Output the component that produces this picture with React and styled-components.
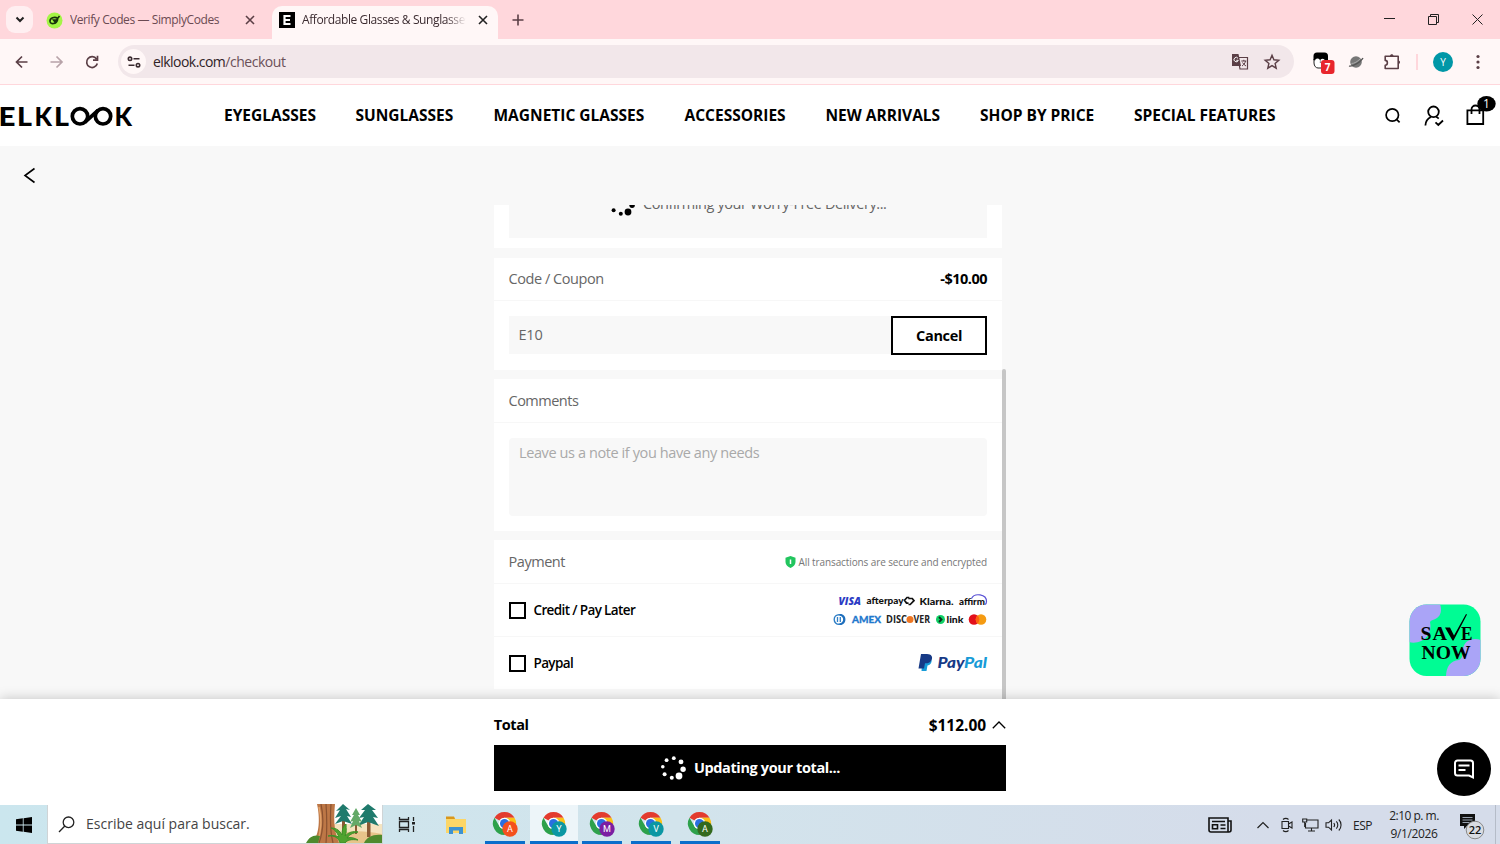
import React from "react";
import styled, { createGlobalStyle } from "styled-components";

const colors = {
  pink: "#ffd7dc",
  toolbar: "#fff7f7",
  address: "#f2e7ea",
  chromeIcon: "#5b3f46",
  page: "#f8f8f8",
  grey: "#666666",
};

const GlobalStyle = createGlobalStyle`
  * {
    box-sizing: border-box;
  }
  body {
    margin: 0;
    font-family: "Open Sans", "Noto Sans", sans-serif;
    overflow: hidden;
  }
  svg {
    display: block;
    flex-shrink: 0;
    overflow: visible;
  }
`;

const Screen = styled.div`
  width: 1500px;
  height: 844px;
  display: flex;
  flex-direction: column;
  overflow: hidden;
  background: #ffffff;
`;

const Text = styled.span`
  font-size: ${({ $size }) => $size || 14.5}px;
  font-weight: ${({ $weight }) => $weight || 400};
  color: ${({ $color }) => $color || "#000000"};
  letter-spacing: ${({ $spacing }) => $spacing || 0}px;
  line-height: 20px;
  white-space: nowrap;
`;

/* ---------- browser ---------- */

const TabStrip = styled.div`
  height: 39px;
  flex-shrink: 0;
  display: flex;
  align-items: flex-end;
  background: ${colors.pink};
`;

const TabSearch = styled.div`
  width: 27px;
  height: 27px;
  margin: 0 0 6px 6px;
  border-radius: 9px;
  background: #ffeff1;
  display: flex;
  align-items: center;
  justify-content: center;
`;

const Tab = styled.div`
  width: ${({ $width }) => $width}px;
  height: 33px;
  padding: 0 10px 5px 7px;
  display: flex;
  align-items: center;
  border-radius: 10px 10px 0 0;
  background: ${({ $active }) => ($active ? colors.toolbar : "transparent")};
  margin-left: ${({ $left }) => $left}px;
`;

const TabTitle = styled(Text)`
  flex: 1;
  margin: 0 12px 0 7px;
  overflow: hidden;
  mask-image: ${({ $fade }) =>
    $fade ? "linear-gradient(90deg, #000 88%, transparent)" : "none"};
`;

const NewTab = styled.div`
  height: 33px;
  padding: 8px 0 0 14px;
`;

const WindowButtons = styled.div`
  height: 39px;
  margin-left: auto;
  display: flex;
  align-items: center;
  gap: 33px;
  padding-right: 17px;
`;

const Toolbar = styled.div`
  height: 46px;
  flex-shrink: 0;
  display: flex;
  align-items: center;
  background: ${colors.toolbar};
  border-bottom: 1px solid ${colors.pink};
  padding: 0 14px;
`;

const NavIcons = styled.div`
  display: flex;
  align-items: center;
  gap: 19px;
  width: 104px;
`;

const AddressBar = styled.div`
  width: 1176px;
  height: 33px;
  border-radius: 17px;
  background: ${colors.address};
  display: flex;
  align-items: center;
  padding: 0 13px 0 3px;
`;

const SiteInfo = styled.div`
  width: 25px;
  height: 25px;
  border-radius: 50%;
  background: ${colors.toolbar};
  display: flex;
  align-items: center;
  justify-content: center;
  margin-right: 7px;
`;

const AddressIcons = styled.div`
  margin-left: auto;
  display: flex;
  gap: 14px;
`;

const Extensions = styled.div`
  flex: 1;
  display: flex;
  align-items: center;
  padding-left: 18px;
`;

const ToolbarRule = styled.div`
  width: 2px;
  height: 16px;
  background: ${colors.pink};
  margin: 0 15px 0 15px;
`;

const Avatar = styled.div`
  width: 20px;
  height: 20px;
  flex-shrink: 0;
  border-radius: 50%;
  background: #0097a7;
  color: #ffffff;
  font-size: 10px;
  display: flex;
  align-items: center;
  justify-content: center;
  margin-right: 23px;
`;

/* ---------- shop ---------- */

const ShopHeader = styled.header`
  height: 61px;
  flex-shrink: 0;
  display: flex;
  align-items: center;
  background: #ffffff;
`;

const Menu = styled.nav`
  display: flex;
  gap: 39px;
  margin-left: 91px;
  padding-bottom: 1px;
`;

const MenuItem = styled.a`
  width: ${({ $width }) => $width}px;
  font-size: 15.5px;
  font-weight: 700;
  line-height: 20px;
  white-space: nowrap;
`;

const HeaderIcons = styled.div`
  margin-left: auto;
  display: flex;
  align-items: center;
  gap: 22px;
  padding-right: 4px;

  svg:last-child {
    margin-bottom: 5px;
    margin-left: -1px;
  }
`;

const Content = styled.main`
  height: 553px;
  flex-shrink: 0;
  display: flex;
  background: ${colors.page};
`;

const BackArea = styled.div`
  width: 494px;
  padding: 21px 0 0 23px;
`;

const Panel = styled.div`
  width: 512px;
  margin-top: 59px;
  display: flex;
  overflow: hidden;
`;

const Cards = styled.div`
  width: 508px;
  height: 494px;
  display: flex;
  flex-direction: column;
  justify-content: flex-end;
  padding-bottom: 10px;
`;

const ScrollTrack = styled.div`
  width: 4px;
  padding-top: 164px;
`;

const ScrollThumb = styled.div`
  width: 4px;
  height: 330px;
  background: #c6c6c6;
  border-radius: 2px 2px 0 0;
`;

const Card = styled.section`
  flex-shrink: 0;
  background: #ffffff;
  margin-bottom: ${({ $gap }) => $gap || 0}px;
`;

const CardHeader = styled.div`
  height: ${({ $height }) => $height || 44}px;
  padding: 0 15px 0 14.5px;
  display: flex;
  align-items: center;
  justify-content: space-between;
  border-bottom: 1px solid #f7f7f7;
`;

const CardBody = styled.div`
  display: flex;
  padding: 15px 15px ${({ $bottom }) => $bottom || 15}px 14.5px;
`;

const Confirming = styled.div`
  width: 479px;
  height: 68px;
  background: ${colors.page};
  display: flex;
  align-items: center;
  justify-content: center;
  gap: 8px;
`;

const CodeInput = styled.div`
  width: 383px;
  height: 38px;
  padding: 7px 10px;
  background: ${colors.page};
`;

const CancelButton = styled.button`
  width: 96px;
  height: 39px;
  margin-bottom: -1px;
  border: 2px solid #000000;
  background: #ffffff;
  padding: 0;
  font-family: inherit;
`;

const Note = styled.div`
  width: 478px;
  height: 78px;
  border-radius: 4px;
  background: ${colors.page};
  padding: 3px 10.5px;
`;

const Secure = styled.div`
  display: flex;
  align-items: center;
  gap: 3px;
`;

const PayRow = styled.div`
  height: ${({ $last }) => ($last ? 52 : 53)}px;
  padding: 0 15px 0 14.5px;
  display: flex;
  align-items: center;
  border-bottom: ${({ $last }) => ($last ? "none" : "1px solid #f7f7f7")};
`;

const Checkbox = styled.div`
  width: 17px;
  height: 17px;
  border: 2px solid #000000;
  margin-right: 8px;
`;

const PayMarks = styled.div`
  margin-left: auto;
`;

const TotalBar = styled.footer`
  height: 106px;
  flex-shrink: 0;
  background: #ffffff;
  box-shadow: 0 0 12px rgba(0, 0, 0, 0.22);
  display: flex;
  flex-direction: column;
  align-items: center;
  padding-top: 16px;
  position: relative;
`;

const TotalRow = styled.div`
  width: 512.5px;
  height: 20px;
  display: flex;
  align-items: center;
`;

const Amount = styled.div`
  margin-left: auto;
  display: flex;
  align-items: center;
  gap: 6px;
`;

const UpdateButton = styled.div`
  width: 512.5px;
  height: 46px;
  margin-top: 10px;
  background: #000000;
  display: flex;
  align-items: center;
  justify-content: center;
  gap: 8px;
`;

const SaveBadge = styled.div`
  position: absolute;
  right: 19px;
  top: 604px;
`;

const ChatButton = styled.div`
  position: absolute;
  right: 9.5px;
  top: 742px;
  width: 54px;
  height: 54px;
  border-radius: 50%;
  background: #000000;
  display: flex;
  align-items: center;
  justify-content: center;
`;

/* ---------- taskbar ---------- */

const Taskbar = styled.div`
  height: 39px;
  flex-shrink: 0;
  display: flex;
  background: linear-gradient(90deg, #cbe6ee, #d2e4ec 45%, #d5dcea 85%);
  position: relative;
`;

const StartButton = styled.div`
  width: 47px;
  display: flex;
  align-items: center;
  justify-content: center;
`;

const SearchBox = styled.div`
  width: 336px;
  border: 1px solid #cfd4d6;
  border-top: none;
  background: #ffffff;
  display: flex;
  align-items: center;
  padding-left: 10px;
`;

const SearchLabel = styled(Text)`
  margin-left: 11px;
`;

const ForestSlot = styled.div`
  margin-left: auto;
  align-self: flex-end;
  overflow: hidden;
`;

const TaskIcon = styled.div`
  width: ${({ $width }) => $width}px;
  display: flex;
  align-items: center;
  justify-content: center;
`;

const TaskApp = styled.div`
  width: ${({ $active }) => ($active ? 48 : 40)}px;
  margin: 0 ${({ $active }) => ($active ? 0.3 : 4.3)}px;
  display: flex;
  align-items: center;
  justify-content: center;
  background: ${({ $active }) => ($active ? "#edf5f9" : "transparent")};
  border-bottom: 3px solid #0a6ecb;
  padding-top: 2px;
`;

const Tray = styled.div`
  margin-left: auto;
  display: flex;
  align-items: center;
`;

const TrayItem = styled.div`
  margin-left: ${({ $left }) => $left}px;
`;

const Clock = styled.div`
  width: 60px;
  margin: 0 15px 0 12px;
  display: flex;
  flex-direction: column;
  align-items: center;
`;

const ClockLine = styled(Text)`
  line-height: 18px;
`;

const CloseIcon = ({ color }) => (
  <svg width="10" height="10" viewBox="0 0 10 10" stroke={color} strokeWidth="1.6">
    <path d="M1 1l8 8M9 1l-8 8" />
  </svg>
);

const dots = [
  [13.8, 4.2, 1.9],
  [21, 7.8, 2.4],
  [23.1, 15.2, 2.7],
  [19, 22, 3.4],
  [11.8, 23.8, 2],
  [4.6, 20.2, 2],
  [2.8, 12.8, 1.8],
  [6.6, 6.2, 1.9],
];

const Spinner = ({ color }) => (
  <svg width="26" height="28" viewBox="0 0 26 28" fill={color}>
    {dots.map(([x, y, r]) => (
      <circle key={x} cx={x} cy={y} r={r} />
    ))}
  </svg>
);

const Logo = () => (
  <svg
    width="133"
    height="24"
    viewBox="0 0 133 24"
    fontFamily="Lato"
    fontWeight="900"
    fontSize="26">
    <text x="-1.5" y="21.5" textLength="17" lengthAdjust="spacingAndGlyphs">E</text>
    <text x="17" y="21.5" textLength="15" lengthAdjust="spacingAndGlyphs">L</text>
    <text x="34.5" y="21.5" textLength="17.5" lengthAdjust="spacingAndGlyphs">K</text>
    <text x="54" y="21.5" textLength="15" lengthAdjust="spacingAndGlyphs">L</text>
    <text x="114.5" y="21.5" textLength="17.5" lengthAdjust="spacingAndGlyphs">K</text>
    <g fill="none" stroke="#000" strokeWidth="3.7">
      <circle cx="80" cy="12.3" r="7.7" />
      <circle cx="103" cy="12.3" r="7.7" />
      <path d="M85 18.200L98 6.400" />
    </g>
  </svg>
);

const SearchIcon = () => (
  <svg width="18" height="18" viewBox="0 0 18 18" fill="none" stroke="#000" strokeWidth="1.7">
    <circle cx="8.300" cy="8" r="6.200" />
    <path d="M12.800 12.600l2.800 2.700" />
  </svg>
);

const UserIcon = () => (
  <svg width="20" height="22" viewBox="0 0 20 22" fill="none" stroke="#000" strokeWidth="1.8">
    <circle cx="9.500" cy="6.800" r="5.300" />
    <path d="M1.400 20.500c.2-4.200 2.200-7 5.600-8.500M12.200 12c1 .4 1.800.9 2.500 1.600M11.500 17.300l2.800 2.600 4.700-4.400" />
  </svg>
);

const BagIcon = () => (
  <svg width="31" height="32" viewBox="0 0 31 32" fill="none" stroke="#000" strokeWidth="1.800">
    <path d="M2.400 13.400h15.800v13.600H2.400zM6.500 17v-4.500a4 4 0 0 1 8 0V17" />
    <ellipse cx="21.500" cy="6.700" rx="9.200" ry="7.800" fill="#000" stroke="none" />
    <text x="21.500" y="11" fill="#fff" stroke="none" fontSize="12" textAnchor="middle" fontFamily="Open Sans">1</text>
  </svg>
);

const PaymentLogos = () => (
  <svg width="156" height="34" viewBox="0 0 156 34" fontFamily="Lato" fontWeight="900" fontSize="10">
    <g transform="translate(0.500 -1.500)">
      <text x="7" y="13.300" fill="#2b3bc4" fontFamily="Open Sans" fontWeight="800" fontStyle="italic" textLength="22.500" lengthAdjust="spacingAndGlyphs">VISA</text>
      <text x="35" y="12.500" fill="#111" textLength="37" lengthAdjust="spacingAndGlyphs">afterpay</text>
      <path d="M77.800 6h-2.300l-2.500 2.800 2 2.800h2M77 13h1.700l3.800-3.800-1.700-2.200h-4" fill="none" stroke="#111" strokeWidth="1.700" />
      <text x="88" y="13" fill="#111" textLength="34" lengthAdjust="spacingAndGlyphs">Klarna.</text>
      <text x="127.500" y="13" fill="#111" textLength="26" lengthAdjust="spacingAndGlyphs">affirm</text>
      <path d="M140 7c3-6 15-4.500 15 3 0 1.500-.5 2.500-1.500 3" fill="none" stroke="#5a52d6" strokeWidth="1.200" />
    </g>
    <g transform="translate(0.500 2)">
      <circle cx="7.500" cy="24.500" r="4.800" fill="#fff" stroke="#2f7fc6" strokeWidth="1.400" />
      <path d="M8 19c8-.5 8 11.500 0 11v-1.500c5-.5 5-7.500 0-8z" fill="#1f6fbd" />
      <path d="M6 22v5M8.800 22v5" stroke="#2f7fc6" strokeWidth="1.300" />
      <text x="20.500" y="28" fill="#1f78cd" stroke="#1f78cd" strokeWidth="0.300" textLength="29" lengthAdjust="spacingAndGlyphs">AMEX</text>
      <text x="54.500" y="28" fill="#222" fontFamily="Open Sans" fontWeight="700" textLength="21" lengthAdjust="spacingAndGlyphs">DISC</text>
      <circle cx="78.500" cy="24.500" r="3.500" fill="#ee7623" />
      <text x="82" y="28" fill="#222" fontFamily="Open Sans" fontWeight="700" textLength="16.500" lengthAdjust="spacingAndGlyphs">VER</text>
      <circle cx="109" cy="24.500" r="4.500" fill="#10d066" />
      <path d="M107.500 22l2.500 2.500-2.500 2.500" fill="none" stroke="#0a2e1c" strokeWidth="1.900" />
      <text x="115" y="28.200" fill="#111" textLength="17" lengthAdjust="spacingAndGlyphs">link</text>
      <circle cx="142.500" cy="24.500" r="5.300" fill="#e3101b" />
      <circle cx="149.500" cy="24.500" r="5.300" fill="#f59b12" />
      <path d="M146 20.500a5.300 5.300 0 0 1 0 8 5.300 5.300 0 0 1 0-8z" fill="#ff6011" />
    </g>
  </svg>
);

const PayPalLogo = () => (
  <svg width="69" height="20" viewBox="0 0 69 20">
    <path d="M4.500 4.500h6.500c4 .5 3.500 7-1.500 8l-1 5.500H3.500z" fill="#179bd7" />
    <path d="M3 1h6c4.500 0 6 3 4.500 6-1 2.500-3.500 3.500-6.500 3.300L6 15.500H.5z" fill="#173a86" />
    <g fontFamily="Lato" fontSize="15.500" fontWeight="900" fontStyle="italic">
      <text x="19.500" y="14.800" fill="#173a86" textLength="27" lengthAdjust="spacingAndGlyphs">Pay</text>
      <text x="46" y="14.800" fill="#179bd7" textLength="23" lengthAdjust="spacingAndGlyphs">Pal</text>
    </g>
  </svg>
);

const SaveNow = () => (
  <svg width="72" height="73" viewBox="0 0 72 73">
    <defs>
      <clipPath id="badge">
        <rect x="0.500" y="0.500" width="71" height="71.500" rx="17" />
      </clipPath>
    </defs>
    <g clipPath="url(#badge)">
      <rect width="72" height="73" fill="#00fc94" />
      <path d="M0 0h31c2 6 1 11-3 14-3 2-6 2-7 4 2 9-2 16-9 19-4 2-9 2-12 1z" fill="#aaa4f7" />
      <path d="M72 36c-8-3-17 0-18 9-1 6 0 9-4 11-9 1-13 7-13 17h35z" fill="#aaa4f7" />
    </g>
    <g fontFamily="Liberation Serif" fontWeight="700" fontSize="19">
      <text x="11.500" y="36" textLength="11" lengthAdjust="spacingAndGlyphs">S</text>
      <text x="23.500" y="36" textLength="14.500" lengthAdjust="spacingAndGlyphs">A</text>
      <text x="52" y="36" textLength="11.500" lengthAdjust="spacingAndGlyphs">E</text>
      <text x="12.500" y="55" textLength="49" lengthAdjust="spacingAndGlyphs">NOW</text>
    </g>
    <path d="M36 23.500h5l4 8L57 10l1 .5L44.500 36.500h-1z" />
  </svg>
);

const ChromeIcon = ({ letter, color }) => (
  <svg width="26" height="27" viewBox="0 0 26 27">
    <path d="M12.500 1a11.500 11.500 0 0 1 10 5.700H12.500A5.800 5.800 0 0 0 7.500 9.600L2.500 6.700A11.500 11.500 0 0 1 12.500 1" fill="#e33b2e" />
    <path d="M22.500 6.700A11.500 11.500 0 0 1 12.500 24L17.500 15.400A5.800 5.800 0 0 0 12.500 6.700z" fill="#fbc116" />
    <path d="M2.500 6.700A11.500 11.500 0 0 0 12.500 24L17.500 15.400A5.800 5.800 0 0 1 7.500 15.400z" fill="#2da14b" />
    <circle cx="12.500" cy="12.500" r="5.800" fill="#fff" />
    <circle cx="12.500" cy="12.500" r="4.500" fill="#2a6fe0" />
    <circle cx="18" cy="18" r="7.700" fill={color} />
    <text x="18" y="21.300" fill="#fff" fontSize="9" textAnchor="middle" fontFamily="Roboto">{letter}</text>
  </svg>
);

const Forest = () => (
  <svg width="76" height="39" viewBox="0 0 76 39">
    <path d="M28 20h48v19H24z" fill="#f4e4c0" />
    <path d="M28 34c12-8 25-8 48-4v9H28z" fill="#e7c48a" />
    <g fill="#8a5a34">
      <path d="M36 12h3v22h-3zM49 14h2v16h-2zM61 12h3.500v21H61z" />
    </g>
    <g fill="#1f7a6c">
      <path d="M37 0l-7 7 4-1-5 8 6-2-6 8 8-3 9 3-5-8 4 1-5-8 4 1z" />
      <path d="M62 0l-7 6 4 0-6 8 5-1-6 9 10-4 11 4-6-9 5 1-6-8 4 0z" />
    </g>
    <path d="M50 4l-4 7 2 0-4 7 3-1-3 7 6-3 6 3-3-7 3 1-4-7 2 0z" fill="#64a968" />
    <path d="M11 0h18c-1 12-2 24 4 39H6c8-8 8-26 5-39z" fill="#bd7746" />
    <path d="M15 0c3 14 2 28-2 39M20 0c1 14 1 27 0 39M25 0c-1 14-1 27 2 39" fill="none" stroke="#8b5230" strokeWidth="1.200" />
    <path d="M13 3c3 12 2 20 0 30" fill="none" stroke="#e2a36b" strokeWidth="1.500" />
    <path d="M0 39c3-6 8-9 14-7l-2 7zM58 39c3-6 9-9 18-8v8z" fill="#4e8a2d" />
    <path d="M34 39c-1-5-6-8-12-7 5-1 8 0 11 1-2-5-5-8-8-9 6 0 9 3 11 7 0-5 1-9 4-11 0 5 1 8-1 12 4-4 8-5 13-4-6 1-9 3-11 6 4-1 8 0 11 2-7-1-11 0-13 3z" fill="#4fa32f" stroke="#3d8f28" />
  </svg>
);

const menu = [
  ["EYEGLASSES", 92.5],
  ["SUNGLASSES", 99],
  ["MAGNETIC GLASSES", 152],
  ["ACCESSORIES", 102],
  ["NEW ARRIVALS", 115.5],
  ["SHOP BY PRICE", 115],
  ["SPECIAL FEATURES", 143],
];

const profiles = [
  { letter: "A", color: "#f4511e" },
  { letter: "Y", color: "#0b97a3", active: true },
  { letter: "M", color: "#7b1fa2" },
  { letter: "V", color: "#0b97a3" },
  { letter: "A", color: "#33691e" },
];

function Browser() {
  return (
    <>
      <TabStrip>
        <TabSearch>
          <svg width="10" height="7" viewBox="0 0 10 7" fill="none" stroke="#222" strokeWidth="2">
            <path d="M1.500 1.500L5 5l3.500-3.500" />
          </svg>
        </TabSearch>
        <Tab $width={226} $left={6}>
          <svg width="17" height="17" viewBox="0 0 17 17">
            <circle cx="8.500" cy="8.500" r="8" fill="#a4f545" />
            <path d="M11.500 6.500C9 4 3.500 6 4 9.500c.5 3.500 6.500 2.500 7.500-1.500H7.500l1.500 2 4.500-6" fill="none" stroke="#17320c" strokeWidth="1.600" />
          </svg>
          <TabTitle $size={12} $color="#6b4a52" $spacing={-0.4}>Verify Codes — SimplyCodes</TabTitle>
          <CloseIcon color={colors.chromeIcon} />
        </Tab>
        <Tab $width={226} $left={7} $active>
          <svg width="16" height="16" viewBox="0 0 16 16">
            <rect width="16" height="16" />
            <path d="M11.500 4H5.500v8h6M5.500 8h5.500" fill="none" stroke="#fff" strokeWidth="2.200" />
          </svg>
          <TabTitle $size={12} $color="#3b2b30" $spacing={-0.4} $fade>
            Affordable Glasses &amp; Sunglasses
          </TabTitle>
          <CloseIcon color="#222" />
        </Tab>
        <NewTab>
          <svg width="12" height="12" viewBox="0 0 12 12" stroke={colors.chromeIcon} strokeWidth="1.600">
            <path d="M6 .5v11M.5 6h11" />
          </svg>
        </NewTab>
        <WindowButtons>
          <svg width="11" height="11" viewBox="0 0 11 11" stroke="#222">
            <path d="M0 4.500h11" />
          </svg>
          <svg width="11" height="11" viewBox="0 0 11 11" fill="none" stroke="#222">
            <path d="M.5 2.500h8v8h-8zM2.500 2.500v-2h8v8h-2" />
          </svg>
          <svg width="11" height="11" viewBox="0 0 11 11" stroke="#222">
            <path d="M.5.5l10 10M10.500.5l-10 10" />
          </svg>
        </WindowButtons>
      </TabStrip>
      <Toolbar>
        <NavIcons>
          <svg width="16" height="16" viewBox="0 0 16 16" fill="none" stroke={colors.chromeIcon} strokeWidth="1.700">
            <path d="M13.500 8H2.500M8 2.500L2.500 8 8 13.500" />
          </svg>
          <svg width="16" height="16" viewBox="0 0 16 16" fill="none" stroke="#b8a3a9" strokeWidth="1.700">
            <path d="M1.500 8h11.500M7.500 2.500L13 8 7.500 13.500" />
          </svg>
          <svg width="16" height="16" viewBox="0 0 16 16" fill="none" stroke={colors.chromeIcon} strokeWidth="1.700">
            <path d="M13.300 9.500A5.400 5.400 0 1 1 12.500 5M13.500 1.800v4.400H9" />
          </svg>
        </NavIcons>
        <AddressBar>
          <SiteInfo>
            <svg width="14" height="12" viewBox="0 0 14 12" fill="none" stroke="#3b2b30" strokeWidth="1.600">
              <circle cx="3" cy="2.800" r="1.700" />
              <path d="M6.500 2.800H12.500M1.500 9.200h6" />
              <circle cx="11" cy="9.200" r="1.700" />
            </svg>
          </SiteInfo>
          <Text $size={14} $color="#2f2327" $spacing={-0.55}>elklook.com</Text>
          <Text $size={14} $color="#6b5058" $spacing={-0.45}>/checkout</Text>
          <AddressIcons>
            <svg width="18" height="18" viewBox="0 0 18 18">
              <path d="M7 4.500h9.500v11.500H9z" fill="none" stroke={colors.chromeIcon} strokeWidth="1.200" />
              <path d="M1 1h6.500l2.500 12H1z" fill={colors.chromeIcon} />
              <path d="M7 5.300a2.200 2.200 0 1 0 .3 2H5.300" fill="none" stroke="#fff" />
              <path d="M10.300 8h5M12.800 6.800V8M14.500 8c-.5 2.500-2 4-3.500 5M11.500 9.500c.8 1.500 2 2.500 3.500 3.500" fill="none" stroke={colors.chromeIcon} />
            </svg>
            <svg width="18" height="18" viewBox="0 0 18 18" fill="none" stroke={colors.chromeIcon} strokeWidth="1.400">
              <path d="M9 2.300l1.900 4.500 4.900.4-3.700 3.200 1.100 4.800L9 12.600l-4.200 2.600 1.100-4.800-3.700-3.200 4.900-.4z" />
            </svg>
          </AddressIcons>
        </AddressBar>
        <Extensions>
          <svg width="23" height="22" viewBox="0 0 23 22">
            <path d="M2 8v4c0 3 2 5 4 5h5V8z" fill="#fff" stroke="#222" />
            <path d="M1.500 9V5a3.500 3.500 0 0 1 3.500-3.500h7.500A3.500 3.500 0 0 1 16 5v7H9.500z" />
            <circle cx="5.500" cy="10" r="2.500" fill="#fff" />
            <circle cx="10.500" cy="10" r="2.300" fill="#fff" />
            <rect x="9" y="9" width="13.500" height="14" rx="3" fill="#e8262d" />
            <text x="15.700" y="20" fill="#fff" fontSize="10" fontWeight="700" textAnchor="middle">7</text>
          </svg>
          <TrayItem $left={13}>
            <svg width="16" height="16" viewBox="0 0 16 16">
              <circle cx="8" cy="8" r="5.800" fill="#777" />
              <path d="M1 12c3 1 12-4 14-8" fill="none" stroke="#555" strokeWidth="1.300" />
              <path d="M3.500 9.500c3 0 6-2 8.500-4.500" fill="none" stroke="#aaa" />
            </svg>
          </TrayItem>
          <TrayItem $left={19}>
            <svg width="18" height="18" viewBox="0 0 18 18" fill="none" stroke={colors.chromeIcon} strokeWidth="1.600">
              <path d="M2.200 3.200h13v12.300h-13V12.200c2.900 0 2.900-4.800 0-4.800z" strokeLinejoin="round" />
              <path d="M7 3c0-2.200 3.500-2.200 3.500 0zM15.400 7.500c2.200 0 2.200 3.500 0 3.500z" fill={colors.chromeIcon} stroke="none" />
            </svg>
          </TrayItem>
          <ToolbarRule />
          <Avatar>Y</Avatar>
          <svg width="4" height="16" viewBox="0 0 4 16" fill={colors.chromeIcon}>
            <circle cx="2" cy="2.500" r="1.600" />
            <circle cx="2" cy="8" r="1.600" />
            <circle cx="2" cy="13.500" r="1.600" />
          </svg>
        </Extensions>
      </Toolbar>
    </>
  );
}

function Checkout() {
  return (
    <Content>
      <BackArea>
        <svg width="14" height="17" viewBox="0 0 14 17" fill="none" stroke="#000" strokeWidth="1.600">
          <path d="M11.500 1.500l-9.500 7 9.500 7" />
        </svg>
      </BackArea>
      <Panel>
        <Cards>
          <Card $gap={10}>
            <CardBody $bottom={10}>
              <Confirming>
                <Spinner color="#000" />
                <Text $color={colors.grey} $spacing={-0.4}>Confirming your Worry-Free Delivery...</Text>
              </Confirming>
            </CardBody>
          </Card>
          <Card $gap={9}>
            <CardHeader $height={43}>
              <Text $color={colors.grey} $spacing={-0.45}>Code / Coupon</Text>
              <Text $weight={700} $spacing={-0.5}>-$10.00</Text>
            </CardHeader>
            <CardBody $bottom={16}>
              <CodeInput>
                <Text $color={colors.grey} $spacing={-0.2}>E10</Text>
              </CodeInput>
              <CancelButton>
                <Text $weight={700} $spacing={-0.35}>Cancel</Text>
              </CancelButton>
            </CardBody>
          </Card>
          <Card $gap={9}>
            <CardHeader>
              <Text $color={colors.grey} $spacing={-0.5}>Comments</Text>
            </CardHeader>
            <CardBody>
              <Note>
                <Text $color="#a9a9a9" $spacing={-0.4}>Leave us a note if you have any needs</Text>
              </Note>
            </CardBody>
          </Card>
          <Card>
            <CardHeader>
              <Text $color={colors.grey} $spacing={-0.45}>Payment</Text>
              <Secure>
                <svg width="11" height="12" viewBox="0 0 11 12">
                  <path d="M5.500 0l5 1.700V6c0 3-2.500 5-5 6-2.500-1-5-3-5-6V1.700z" fill="#22c55e" />
                  <path d="M5.500 3.500v4.500" stroke="#fff" strokeWidth="1.500" />
                </svg>
                <Text $size={10} $color="#777" $spacing={-0.11}>All transactions are secure and encrypted</Text>
              </Secure>
            </CardHeader>
            <PayRow>
              <Checkbox />
              <Text $size={13.5} $weight={600} $spacing={-0.63}>Credit / Pay Later</Text>
              <PayMarks>
                <PaymentLogos />
              </PayMarks>
            </PayRow>
            <PayRow $last>
              <Checkbox />
              <Text $size={13.5} $weight={600} $spacing={-0.63}>Paypal</Text>
              <PayMarks>
                <PayPalLogo />
              </PayMarks>
            </PayRow>
          </Card>
        </Cards>
        <ScrollTrack>
          <ScrollThumb />
        </ScrollTrack>
      </Panel>
    </Content>
  );
}

function WindowsBar() {
  return (
    <Taskbar>
      <StartButton>
        <svg width="16" height="16" viewBox="0 0 16 16">
          <path d="M0 2.300l6.800-1v6.300H0zM7.600 1.200L16 0v7.600H7.600zM0 8.400h6.800v6.300L0 13.700zM7.600 8.400H16V16l-8.400-1.200z" />
        </svg>
      </StartButton>
      <SearchBox>
        <svg width="17" height="17" viewBox="0 0 17 17" fill="none" stroke="#222" strokeWidth="1.300">
          <circle cx="10.500" cy="6.300" r="5.300" />
          <path d="M6.800 10L1 16" />
        </svg>
        <SearchLabel $size={14} $color="#444">Escribe aquí para buscar.</SearchLabel>
        <ForestSlot>
          <Forest />
        </ForestSlot>
      </SearchBox>
      <TaskIcon $width={47}>
        <svg width="18" height="17" viewBox="0 0 18 17" fill="none" stroke="#222" strokeWidth="1.300">
          <path d="M1.500 1v2.500h9V1M1.500 16v-2.500h9V16M1.500 5.500h9v6h-9zM15.500 1v4M15.500 10v6" />
          <path d="M14 6h3v2.500h-3z" fill="#222" stroke="none" />
        </svg>
      </TaskIcon>
      <TaskIcon $width={51}>
        <svg width="22" height="18" viewBox="0 0 22 18">
          <path d="M1 1h8l1.500 2H21v14H1z" fill="#fcd667" />
          <path d="M1 .5h8l1 2.500H1z" fill="#d9971c" />
          <path d="M4 18V11h14v7h-4v-3.500H8V18z" fill="#3d92d0" />
        </svg>
      </TaskIcon>
      {profiles.map((profile) => (
        <TaskApp key={profile.letter + profile.color} $active={profile.active}>
          <ChromeIcon letter={profile.letter} color={profile.color} />
        </TaskApp>
      ))}
      <Tray>
        <svg width="24" height="16" viewBox="0 0 24 16" fill="none" stroke="#111" strokeWidth="1.600">
          <path d="M1 1h19v14H3a2 2 0 0 1-2-2zM20 4h3v9a2 2 0 0 1-2 2h-3M4 4.500h13M12.500 8h5M12.500 11.500h5M4.500 7.800h5v4h-5z" />
        </svg>
        <TrayItem $left={25}>
          <svg width="12" height="8" viewBox="0 0 12 8" fill="none" stroke="#222" strokeWidth="1.200">
            <path d="M.5 7L6 1.500 11.500 7" />
          </svg>
        </TrayItem>
        <TrayItem $left={12}>
          <svg width="12" height="16" viewBox="0 0 12 16" fill="none" stroke="#222" strokeWidth="1.100">
            <path d="M1 4.500h6.500v7H1zM7.500 7l3.500-2v6l-3.500-2M2 2.500c1.500-1.500 4-1.500 5.500 0M2 13.500c1.500 1.500 4 1.500 5.500 0" />
          </svg>
        </TrayItem>
        <TrayItem $left={9}>
          <svg width="17" height="14" viewBox="0 0 17 14" fill="none" stroke="#222" strokeWidth="1.100">
            <path d="M5 2h11v8H3.500V5M6 13h7M9.500 10v3M.7 1h4v3h-4zM2.700 4v5" />
          </svg>
        </TrayItem>
        <TrayItem $left={6}>
          <svg width="18" height="14" viewBox="0 0 18 14" fill="none" stroke="#222" strokeWidth="1.100">
            <path d="M1 4.800h2.500L6.500 2v10L3.500 9.200H1zM8.800 5c1 1.200 1 2.800 0 4M11.300 3.300c2 2 2 5.400 0 7.400M13.800 1.500c3 3 3 8 0 11" />
          </svg>
        </TrayItem>
        <TrayItem $left={10}>
          <Text $size={12} $color="#222" $spacing={-0.5}>ESP</Text>
        </TrayItem>
        <Clock>
          <ClockLine $size={12} $color="#222" $spacing={-0.5}>2:10 p. m.</ClockLine>
          <ClockLine $size={12} $color="#222" $spacing={-0.4}>9/1/2026</ClockLine>
        </Clock>
        <svg width="26" height="24" viewBox="0 0 26 24">
          <path d="M1 1h15v12h-8l-3 3v-3H1z" fill="#111" />
          <path d="M3.500 4.500h10M3.500 7h10M3.500 9.500h7" stroke="#9aa3b0" />
          <circle cx="16" cy="17" r="8.800" fill="#d9dce2" stroke="#888" />
          <text x="16" y="21" fontSize="11" fontWeight="600" textAnchor="middle" fill="#111">22</text>
        </svg>
        <svg width="15" height="39" viewBox="0 0 15 39" stroke="#b5bcc8">
          <path d="M10.500 0v39" />
        </svg>
      </Tray>
    </Taskbar>
  );
}

function App() {
  return (
    <>
      <GlobalStyle />
      <Screen>
        <Browser />
        <ShopHeader>
          <Logo />
          <Menu>
            {menu.map(([label, width]) => (
              <MenuItem key={label} $width={width}>{label}</MenuItem>
            ))}
          </Menu>
          <HeaderIcons>
            <SearchIcon />
            <UserIcon />
            <BagIcon />
          </HeaderIcons>
        </ShopHeader>
        <Checkout />
        <TotalBar>
          <TotalRow>
            <Text $weight={700} $spacing={-0.4}>Total</Text>
            <Amount>
              <Text $size={15.5} $weight={700}>$112.00</Text>
              <svg width="14" height="8" viewBox="0 0 14 8" fill="none" stroke="#000" strokeWidth="1.300">
                <path d="M.8 7.200L7 1l6.200 6.200" />
              </svg>
            </Amount>
          </TotalRow>
          <UpdateButton>
            <Spinner color="#fff" />
            <Text $weight={700} $color="#fff" $spacing={-0.38}>Updating your total...</Text>
          </UpdateButton>
        </TotalBar>
        <WindowsBar />
        <SaveBadge>
          <SaveNow />
        </SaveBadge>
        <ChatButton>
          <svg width="22" height="21" viewBox="0 0 22 21" fill="none" stroke="#fff" strokeWidth="2">
            <path d="M20 18.500V4a2.500 2.500 0 0 0-2.500-2.500h-13A2.500 2.500 0 0 0 2 4v10a2.500 2.500 0 0 0 2.500 2.500H16z" />
            <path d="M5.500 6.500h11M5.500 11h7" />
          </svg>
        </ChatButton>
      </Screen>
    </>
  );
}

export default App;
